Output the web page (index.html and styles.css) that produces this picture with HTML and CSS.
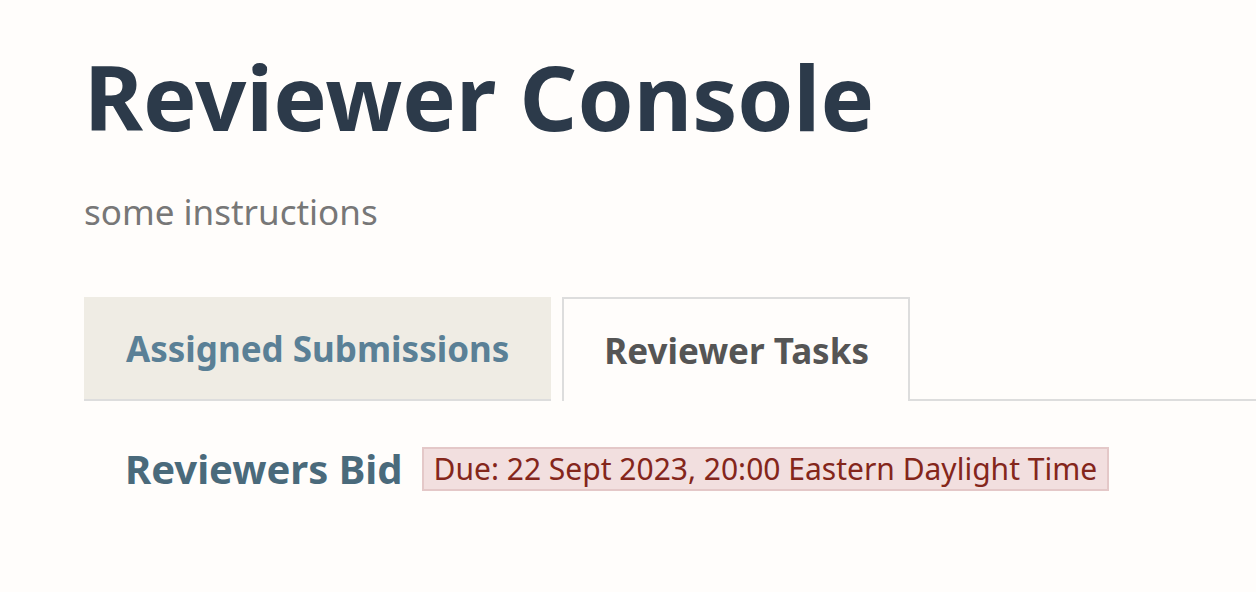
FILE: index.html
```html
<!DOCTYPE html>
<html>
<head>
<meta charset="utf-8">
<link rel="stylesheet" href="styles.css">
</head>
<body>
<main class="page">
  <h1 class="title">Reviewer Console</h1>
  <p class="instructions">some instructions</p>
  <nav class="tabs">
    <div class="tab tab-inactive">Assigned Submissions</div>
    <div class="tab tab-active">Reviewer Tasks</div>
    <div class="tab-fill"></div>
  </nav>
  <section class="task">
    <h4 class="task-name">Reviewers Bid</h4>
    <span class="due">Due: 22 Sept 2023, 20:00 Eastern Daylight Time</span>
  </section>
</main>
</body>
</html>
```
FILE: styles.css
```css
html, body {
  margin: 0;
  padding: 0;
  background: #fffdfb;
  font-family: "Noto Sans", "Open Sans", sans-serif;
}
.page {
  padding: 42px 0 0 84px;
}
.title {
  margin: 0;
  font-size: 90px;
  font-weight: 700;
  line-height: 108px;
  color: #2c3a4a;
}
.instructions {
  margin: 38px 0 0 0;
  font-size: 35px;
  line-height: 48px;
  color: #777;
}
.tabs {
  display: flex;
  align-items: stretch;
  margin-top: 61px;
  height: 104px;
}
.tab {
  display: flex;
  align-items: center;
  padding: 0 42px;
  font-size: 35px;
  font-weight: 700;
  box-sizing: border-box;
}
.tab-inactive {
  background: #efece4;
  color: #5a8096;
  border-bottom: 2px solid #ddd;
  margin-right: 11px;
}
.tab-active {
  background: #fffdfb;
  color: #555;
  border: 2px solid #ddd;
  border-bottom: none;
  padding: 0 39px 0 40px;
}
.tab-fill {
  flex: 1;
  border-bottom: 2px solid #ddd;
}
.task {
  display: flex;
  align-items: center;
  gap: 19px;
  padding: 40px 0 0 41px;
}
.task-name {
  margin: 0;
  font-size: 40px;
  font-weight: 700;
  color: #4a6a7b;
}
.due {
  font-size: 30px;
  color: #84261b;
  background: #f2dfdf;
  border: 2px solid #e4c8c8;
  padding: 0 10px;
  line-height: 40px;
}
```
